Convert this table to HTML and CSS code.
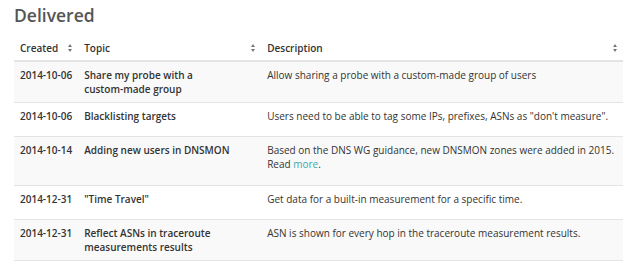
FILE: index.html
```html
<!DOCTYPE html>
<html>
<head>
<meta charset="utf-8">
<link rel="stylesheet" href="styles.css">
</head>
<body>
<div class="page">
  <h2 class="title">Delivered</h2>
  <table class="roadmap">
    <colgroup>
      <col class="c-created">
      <col class="c-topic">
      <col class="c-desc">
    </colgroup>
    <thead>
      <tr>
        <th><div class="th-in"><span>Created</span><span class="sort"></span></div></th>
        <th><div class="th-in"><span>Topic</span><span class="sort"></span></div></th>
        <th><div class="th-in"><span>Description</span><span class="sort"></span></div></th>
      </tr>
    </thead>
    <tbody>
      <tr>
        <td class="date">2014-10-06</td>
        <td class="topic">Share my probe with a <span class="nw">custom-made</span> group</td>
        <td class="desc"><p>Allow sharing a probe with a custom-made group of users</p></td>
      </tr>
      <tr>
        <td class="date">2014-10-06</td>
        <td class="topic">Blacklisting targets</td>
        <td class="desc"><p>Users need to be able to tag some IPs, prefixes, ASNs as "don't measure".</p></td>
      </tr>
      <tr>
        <td class="date">2014-10-14</td>
        <td class="topic">Adding new users in DNSMON</td>
        <td class="desc"><p>Based on the DNS WG guidance, new DNSMON zones were added in 2015. Read <a href="#">more</a>.</p></td>
      </tr>
      <tr>
        <td class="date">2014-12-31</td>
        <td class="topic">"Time Travel"</td>
        <td class="desc"><p>Get data for a built-in measurement for a specific time.</p></td>
      </tr>
      <tr>
        <td class="date">2014-12-31</td>
        <td class="topic">Reflect ASNs in traceroute measurements results</td>
        <td class="desc"><p>ASN is shown for every hop in the traceroute measurement results.</p></td>
      </tr>
    </tbody>
  </table>
</div>
</body>
</html>
```

FILE: styles.css
```css
html, body {
  margin: 0;
  padding: 0;
  background: #fff;
}

.page {
  padding: 0 17px 0 14px;
  font-family: "Open Sans", "Liberation Sans", sans-serif;
  color: #333;
}

.title {
  margin: 2px 0 7px 0;
  font-size: 17.5px;
  line-height: 26px;
  font-weight: 600;
  color: #555;
}

.roadmap {
  width: 100%;
  border-collapse: collapse;
  font-size: 10px;
  line-height: 14px;
}

.c-created { width: 63px; }
.c-topic { width: 183px; }

.roadmap th {
  text-align: left;
  font-weight: 600;
  color: #333;
  padding: 6px 5px 5px 6px;
  border-bottom: 2px solid #e4e4e4;
  vertical-align: bottom;
}

.th-in {
  display: flex;
  align-items: center;
  justify-content: space-between;
}

.sort {
  width: 5px;
  height: 8px;
  position: relative;
}
.sort::before,
.sort::after {
  content: "";
  position: absolute;
  left: 0;
  border-left: 2.5px solid transparent;
  border-right: 2.5px solid transparent;
}
.sort::before {
  top: 0;
  border-bottom: 3.5px solid #777;
}
.sort::after {
  bottom: 0;
  border-top: 3.5px solid #777;
}

.roadmap td {
  padding: 6px 6px 5.5px 6px;
  vertical-align: top;
  border-bottom: 1px solid #e4e4e4;
}

.roadmap td.desc {
  padding-right: 2px;
}

.roadmap tbody tr:nth-child(odd) td {
  background: #f9f9f9;
}

.date, .topic {
  font-weight: 600;
}

.date {
  white-space: nowrap;
}

.nw {
  white-space: nowrap;
}

.desc p {
  margin: 0 0 8px 0;
}

.desc a {
  color: #3aa9ad;
  text-decoration: none;
}
```
